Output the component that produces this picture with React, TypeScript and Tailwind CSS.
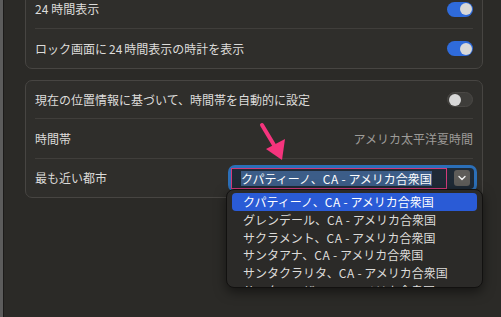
import React from 'react';

const cities = [
    'クパティーノ、CA - アメリカ合衆国',
    'グレンデール、CA - アメリカ合衆国',
    'サクラメント、CA - アメリカ合衆国',
    'サンタアナ、CA - アメリカ合衆国',
    'サンタクラリタ、CA - アメリカ合衆国',
    'サンタローザ、CA - アメリカ合衆国',
];

function Toggle({ on }: { on: boolean }) {
    return (
        <div
            className={
                on
                    ? 'w-[26px] h-[15px] rounded-full bg-[#2f6bdb] flex items-center justify-end px-[1.5px]'
                    : 'w-[26px] h-[15px] rounded-full bg-[#3e3d3a] border border-[#4a4845] flex items-center justify-start px-[1px]'
            }
        >
            <div className="w-[12px] h-[12px] rounded-full bg-[#d8d8d8]" />
        </div>
    );
}

function City({ name }: { name: string }) {
    const [place, rest] = name.split('CA - ');
    return (
        <>
            {place}
            <span className="tracking-[0.6px]">CA</span>
            <span className="whitespace-pre"> - </span>
            {rest}
        </>
    );
}

export default function App() {
    return (
        <div
            className="w-[501px] h-[317px] flex overflow-hidden bg-[#2b2a27] text-[#dddcda] relative"
            style={{ fontFamily: '"Noto Sans CJK JP", "Noto Sans", sans-serif' }}
        >
            {/* window edge */}
            <div className="w-[3px] bg-[#5c5c5c]" />
            <div className="w-[1px] bg-[#1c1b1a]" />

            <div className="flex-1 flex flex-col pl-[21px] pr-[18px]">
                {/* card 1 */}
                <div className="-mt-[11px] rounded-[7px] border border-[#474542] bg-[#2f2e2b] px-[9px]">
                    <div className="h-[39px] flex items-center justify-between border-b border-[#403e3b]">
                        <span className="text-[12px]">
                            <span className="mr-[3px]">24</span>時間表示
                        </span>
                        <Toggle on />
                    </div>
                    <div className="h-[39px] flex items-center justify-between">
                        <span className="text-[12px]">
                            ロック画面に<span className="mx-[2px]">24</span>時間表示の時計を表示
                        </span>
                        <Toggle on />
                    </div>
                </div>

                {/* card 2 */}
                <div className="mt-[11px] rounded-[7px] border border-[#474542] bg-[#2f2e2b] px-[9px]">
                    <div className="h-[38px] flex items-center justify-between border-b border-[#403e3b]">
                        <span className="text-[12px]">現在の位置情報に基づいて、時間帯を自動的に設定</span>
                        <Toggle on={false} />
                    </div>
                    <div className="h-[40px] flex items-center justify-between border-b border-[#403e3b]">
                        <span className="text-[12px]">時間帯</span>
                        <span className="text-[12px] text-[#9e9c99]">アメリカ太平洋夏時間</span>
                    </div>
                    <div className="h-[38px] flex items-center justify-between">
                        <span className="text-[12px]">最も近い都市</span>
                        <div className="w-[243px] h-[21px] -mr-[1px] rounded-[4px] bg-[#1f2a36] ring-[3px] ring-[#2b6fb8] flex items-center justify-between pl-[10px] pr-[4px] relative">
                            <span className="text-[12px] text-white bg-[#3c5d88] leading-[15px] whitespace-nowrap">
                                <City name={cities[0]} />
                            </span>
                            <div className="w-[16px] h-[16px] rounded-[3px] bg-[#5e5c59] flex items-center justify-center">
                                <svg width="8" height="6" viewBox="0 0 8 6" fill="none">
                                    <path d="M1 1.5 L4 4.5 L7 1.5" stroke="#f0f0f0" strokeWidth="1.4" strokeLinecap="round" strokeLinejoin="round" />
                                </svg>
                            </div>
                            {/* annotation box */}
                            <div className="absolute left-[0px] top-[0px] w-[216px] h-[21px] border border-[#d23a7a]" />
                        </div>
                    </div>
                </div>
            </div>

            {/* dropdown menu */}
            <div className="absolute left-[226px] top-[189px] w-[257px] h-[99px] rounded-[8px] border border-[#121110] bg-[#2b2a28] shadow-[0_4px_12px_rgba(0,0,0,0.5)] overflow-hidden px-[5px] pt-[3px]">
                {cities.map((c, i) => (
                    <div
                        key={c}
                        className={
                            i === 0
                                ? 'h-[17.8px] rounded-[4px] bg-[#2a5bd6] text-white flex items-center pl-[11px] text-[12px] whitespace-nowrap'
                                : 'h-[17.8px] text-[#dddcda] flex items-center pl-[11px] text-[12px] whitespace-nowrap'
                        }
                    >
                        <City name={c} />
                    </div>
                ))}
            </div>

            {/* pink arrow */}
            <svg className="absolute left-[255px] top-[120px]" width="40" height="46" viewBox="0 0 40 46">
                <line x1="7" y1="5" x2="22" y2="30" stroke="#f5347d" strokeWidth="4" strokeLinecap="round" />
                <polygon points="27,40 11,29 30,19" fill="#f5347d" />
            </svg>
        </div>
    );
}
